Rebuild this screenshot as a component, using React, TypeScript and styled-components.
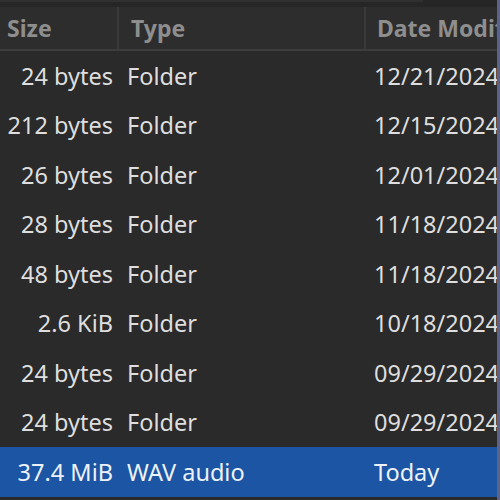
import React from "react";
import styled, { createGlobalStyle } from "styled-components";

const Global = createGlobalStyle`
  html, body { margin: 0; padding: 0; background: #2a2a2a; }
  body { width: 500px; height: 500px; overflow: hidden; font-family: "Noto Sans", "DejaVu Sans", sans-serif; }
`;

const Window = styled.div`
  width: 500px;
  height: 500px;
  background: #2a2a2a;
  display: flex;
  flex-direction: column;
  position: relative;
  overflow: hidden;
`;

const TopStrip = styled.div`
  height: 7px;
  background: #262626;
  display: flex;
`;

const TopLine = styled.div`
  width: 423px;
  height: 2px;
  background: #303030;
`;

const Header = styled.div`
  display: grid;
  grid-template-columns: 119px 247px 1fr;
  height: 42px;
  background: #2d2d2d;
  border-bottom: 2px solid #3c3c3c;
`;

const HeadCell = styled.div<{ $pad: number; $sep?: boolean }>`
  display: flex;
  align-items: center;
  padding-left: ${(p) => p.$pad}px;
  border-right: ${(p) => (p.$sep ? "2px solid #3a3a3a" : "none")};
  color: #8e8e8e;
  font-weight: 700;
  font-size: 23px;
  white-space: nowrap;
  overflow: hidden;
`;

const Rows = styled.div`
  display: flex;
  flex-direction: column;
`;

const Row = styled.div<{ $selected?: boolean }>`
  display: grid;
  grid-template-columns: 119px 247px 1fr;
  height: 49.5px;
  align-items: center;
  background: ${(p) => (p.$selected ? "#1b55a3" : "transparent")};
  color: ${(p) => (p.$selected ? "#eef2f8" : "#dedede")};
  font-size: 23.5px;
  white-space: nowrap;
`;

const SizeCell = styled.div`
  text-align: right;
  padding-right: 6px;
`;

const TypeCell = styled.div`
  padding-left: 8px;
`;

const DateCell = styled.div`
  padding-left: 8px;
  overflow: hidden;
`;

const Edge = styled.div`
  position: absolute;
  top: 0;
  right: 0;
  width: 3px;
  height: 100%;
  background: #5a6388;
`;

const data = [
  ["24 bytes", "Folder", "12/21/2024"],
  ["212 bytes", "Folder", "12/15/2024"],
  ["26 bytes", "Folder", "12/01/2024"],
  ["28 bytes", "Folder", "11/18/2024"],
  ["48 bytes", "Folder", "11/18/2024"],
  ["2.6 KiB", "Folder", "10/18/2024"],
  ["24 bytes", "Folder", "09/29/2024"],
  ["24 bytes", "Folder", "09/29/2024"],
  ["37.4 MiB", "WAV audio", "Today"],
];

export default function App() {
  return (
    <>
      <Global />
      <Window>
        <TopStrip>
          <TopLine />
        </TopStrip>
        <Header>
          <HeadCell $pad={7} $sep>Size</HeadCell>
          <HeadCell $pad={12} $sep>Type</HeadCell>
          <HeadCell $pad={11}>Date Modified</HeadCell>
        </Header>
        <Rows>
          {data.map((r, i) => (
            <Row key={i} $selected={i === data.length - 1}>
              <SizeCell>{r[0]}</SizeCell>
              <TypeCell>{r[1]}</TypeCell>
              <DateCell>{r[2]}</DateCell>
            </Row>
          ))}
        </Rows>
        <Edge />
      </Window>
    </>
  );
}
